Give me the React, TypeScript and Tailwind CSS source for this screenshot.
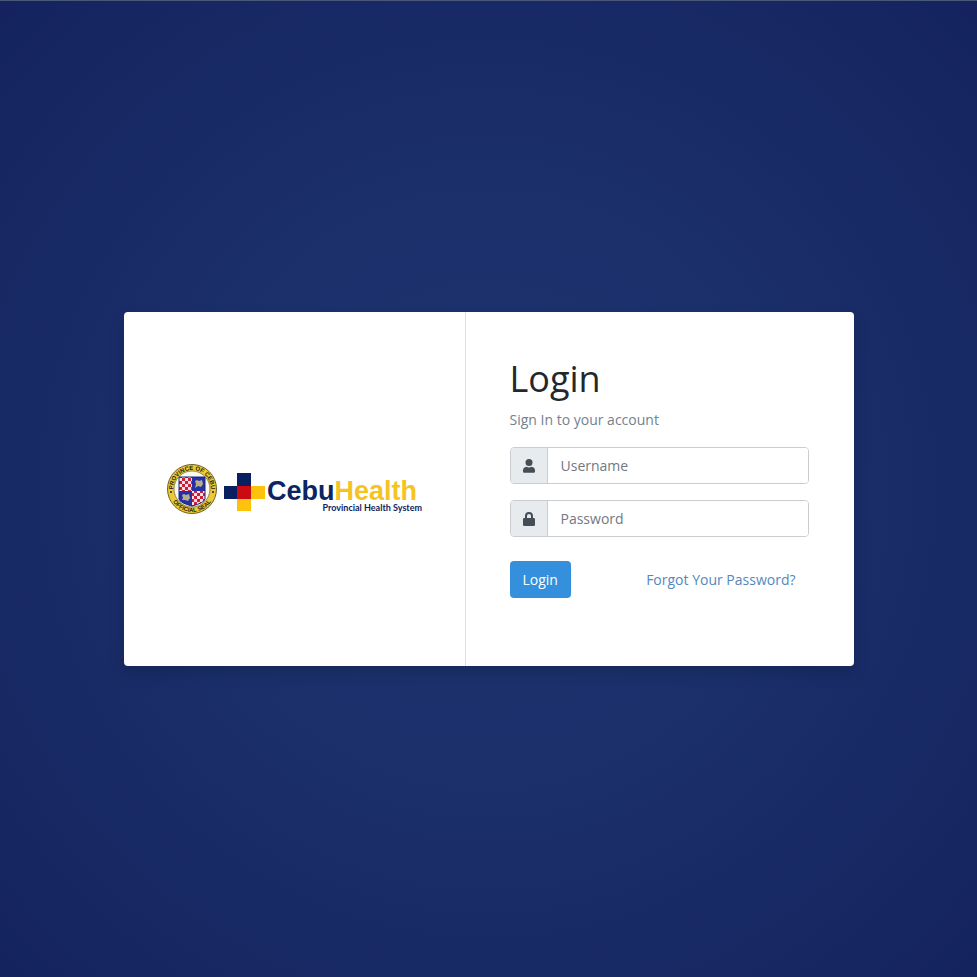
import React from "react";

function Seal() {
  return (
    <g>
      <defs>
        <pattern id="checks" width="6" height="6" patternUnits="userSpaceOnUse">
          <rect width="6" height="6" fill="#f6e3ea" />
          <rect width="3" height="3" fill="#cf1f38" />
          <rect x="3" y="3" width="3" height="3" fill="#cf1f38" />
        </pattern>
        <path id="arc-top" d="M 6 26 A 19 19 0 0 1 44 26" />
        <path id="arc-bottom" d="M 2 26 A 23 23 0 0 0 48 26" />
        <clipPath id="shield">
          <path d="M12 14 H38 V36 Q37 40 25 43 Q13 40 12 36 Z" />
        </clipPath>
      </defs>
      <circle cx="25" cy="26" r="24.5" fill="#ecc936" stroke="#6d6128" />
      <circle cx="25" cy="26" r="18" fill="#fbfaf0" stroke="#6d6128" strokeWidth="0.7" />
      <g clipPath="url(#shield)">
        <rect x="12" y="14" width="13" height="14" fill="url(#checks)" />
        <rect x="25" y="14" width="13" height="14" fill="#2531a5" />
        <rect x="12" y="28" width="13" height="16" fill="#2531a5" />
        <rect x="25" y="28" width="13" height="16" fill="url(#checks)" />
        <path d="M28 18 L30 17 L32 18 L35 17 L36 21 L34 24 L31 23 L28 25 L29 21 Z" fill="#b9ad8a" />
        <path d="M15 32 L17 31 L19 32 L22 31 L23 35 L21 38 L18 37 L15 37 L16 35 Z" fill="#b9ad8a" />
      </g>
      <path
        d="M12 14 H38 V36 Q37 40 25 43 Q13 40 12 36 Z"
        fill="none"
        stroke="#1d277c"
      />
      <g className="font-['Liberation_Sans',sans-serif] text-[6px] font-bold" fill="#292410" textAnchor="middle">
        <text>
          <textPath href="#arc-top" startOffset="50%">PROVINCE OF CEBU</textPath>
        </text>
        <text>
          <textPath href="#arc-bottom" startOffset="50%">OFFICIAL SEAL</textPath>
        </text>
      </g>
      <circle cx="4" cy="29" r="1" fill="#292410" />
      <circle cx="46" cy="29" r="1" fill="#292410" />
    </g>
  );
}

function Logo() {
  return (
    <svg viewBox="0 0 255 52" className="w-[255px] shrink-0" role="img" aria-label="CebuHealth">
      <Seal />
      <rect x="57" y="23" width="14" height="13" fill="#08205f" />
      <rect x="70" y="10" width="14" height="13" fill="#08205f" />
      <rect x="84" y="23" width="14" height="13" fill="#fdc20c" />
      <rect x="70" y="36" width="14" height="12" fill="#fdc20c" />
      <rect x="70" y="23" width="14" height="13" fill="#cc0a12" />
      <text x="100" y="37" className="font-['Liberation_Sans',sans-serif] text-[27px] font-bold" fill="#0c2461">
        Cebu<tspan fill="#f6c324">Health</tspan>
      </text>
      <text x="255" y="48" textAnchor="end" className="font-['Lato',sans-serif] text-[9px] font-bold" fill="#0c2461">
        Provincial Health System
      </text>
    </svg>
  );
}

function UserIcon() {
  return (
    <svg viewBox="0 0 14 14" className="size-3.5" fill="currentColor" aria-hidden="true">
      <circle cx="7" cy="3.5" r="3.5" />
      <path d="M4.500 7.800Q7 9 9.500 7.800Q13 8.200 13 11.500v1q0 1.200-1.200 1.200H2.200Q1 13.700 1 12.500v-1Q1 8.200 4.500 7.800z" />
    </svg>
  );
}

function LockIcon() {
  return (
    <svg viewBox="0 0 14 14" className="size-3.5" fill="currentColor" aria-hidden="true">
      <path d="M2.2 6h9.6q1.2 0 1.2 1.2v5.6q0 1.2-1.2 1.2H2.2Q1 14 1 12.8V7.200Q1 6 2.200 6z" />
      <path d="M4 7V4a3 3 0 0 1 6 0v3" fill="none" stroke="currentColor" strokeWidth="2" />
    </svg>
  );
}

type FieldProps = { id: string; label: string; type: string; icon: React.ReactNode };

function Field({ id, label, type, icon }: FieldProps) {
  return (
    <div className="flex h-[37px] overflow-hidden rounded border border-[#c9cdd1]">
      <label
        htmlFor={id}
        aria-label={label}
        className="flex w-[37px] shrink-0 items-center justify-center border-r border-[#c9cdd1] bg-[#e7ebee] text-[#454d56]"
      >
        {icon}
      </label>
      <input
        id={id}
        type={type}
        placeholder={label}
        className="min-w-0 flex-1 bg-white px-[13px] text-sm text-[#495057] outline-none placeholder:text-[#73797f]"
      />
    </div>
  );
}

export default function App() {
  return (
    <main className="flex min-h-screen items-center justify-center border-t border-[#4a5878] bg-[radial-gradient(circle,#1e3470_0%,#1b2f6b_45%,#14235e_100%)] px-4 font-['Open_Sans',sans-serif] text-sm">
      <div className="flex min-h-[354px] w-full max-w-[730px] overflow-hidden rounded bg-white shadow-[0_8px_16px_rgba(0,0,0,0.15)]">
        <section className="flex w-[342px] shrink-0 items-center justify-center border-r border-[#dde0e4]">
          <Logo />
        </section>
        <form className="flex-1 pt-11 pr-[45px] pl-11" onSubmit={(e) => e.preventDefault()}>
          <h1 className="mb-[7px] text-4xl leading-[46px] text-[#23282c]">Login</h1>
          <p className="mb-[17px] leading-[21px] text-[#73818f]">Sign In to your account</p>
          <div className="flex flex-col gap-4">
            <Field id="username" label="Username" type="text" icon={<UserIcon />} />
            <Field id="password" label="Password" type="password" icon={<LockIcon />} />
          </div>
          <div className="mt-6 flex items-center justify-between">
            <button type="submit" className="h-[37px] rounded bg-[#3490dc] px-[13px] text-white">
              Login
            </button>
            <a href="#forgot" className="px-[13px] text-[#5388bd]">
              Forgot Your Password?
            </a>
          </div>
        </form>
      </div>
    </main>
  );
}
